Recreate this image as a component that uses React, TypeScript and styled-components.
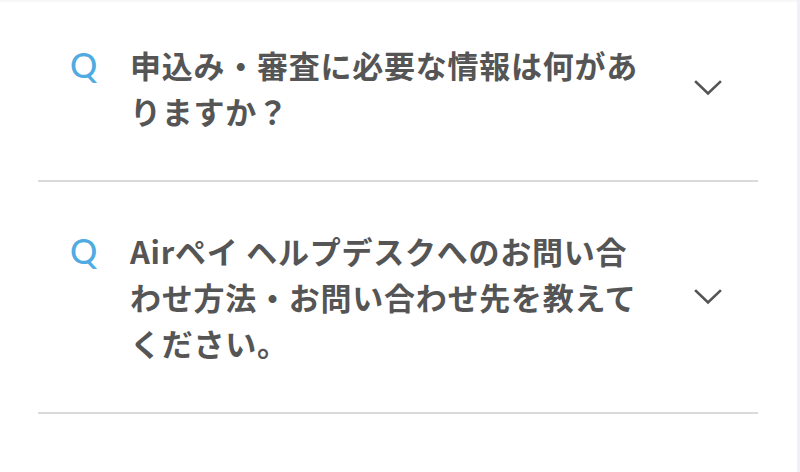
import React from 'react';
import styled, { createGlobalStyle } from 'styled-components';

const GlobalStyle = createGlobalStyle`
  html, body {
    margin: 0;
    padding: 0;
    background: #eef1f5;
  }
  body {
    font-family: 'Noto Sans CJK JP', 'Noto Sans', sans-serif;
  }
`;

const Page = styled.div`
  width: 797px;
  height: 472px;
  background: #ffffff;
  box-shadow: inset 0 3px 3px -2px rgba(0, 0, 0, 0.06);
  overflow: hidden;
`;

const List = styled.ul`
  list-style: none;
  margin: -4px 0 0;
  padding: 0 39px 0 38px;
`;

const Item = styled.li`
  display: flex;
  align-items: center;
  padding: 46px 36px 46px 32px;
  border-bottom: 2px solid #dadada;
  cursor: pointer;
`;

const Mark = styled.span`
  flex-shrink: 0;
  align-self: flex-start;
  width: 60px;
  font-family: Lato, 'Noto Sans', sans-serif;
  font-size: 34px;
  font-weight: 500;
  line-height: 46px;
  color: #4fabe1;
`;

const Question = styled.p`
  width: 516px;
  margin: 0;
  font-family: 'Noto Sans CJK JP', sans-serif;
  font-size: 31px;
  font-weight: 700;
  letter-spacing: 0.75px;
  line-height: 46px;
  color: #555555;
`;

const Toggle = styled.span`
  margin-left: auto;
  display: flex;
  align-items: center;
  justify-content: center;
  width: 28px;
  height: 18px;
`;

const Chevron = () => (
  <svg width="28" height="16" viewBox="0 0 28 16" fill="none">
    <path d="M2 2 L14 13.5 L26 2" stroke="#555555" strokeWidth="2.6" strokeLinecap="square" />
  </svg>
);

const faqs = [
  '申込み・審査に必要な情報は何がありますか？',
  'Airペイ ヘルプデスクへのお問い合わせ方法・お問い合わせ先を教えてください。',
];

const App = () => {
  return (
    <Page>
      <GlobalStyle />
      <List>
        {faqs.map((q) => (
          <Item key={q}>
            <Mark>Q</Mark>
            <Question>{q}</Question>
            <Toggle>
              <Chevron />
            </Toggle>
          </Item>
        ))}
      </List>
    </Page>
  );
};

export default App;
